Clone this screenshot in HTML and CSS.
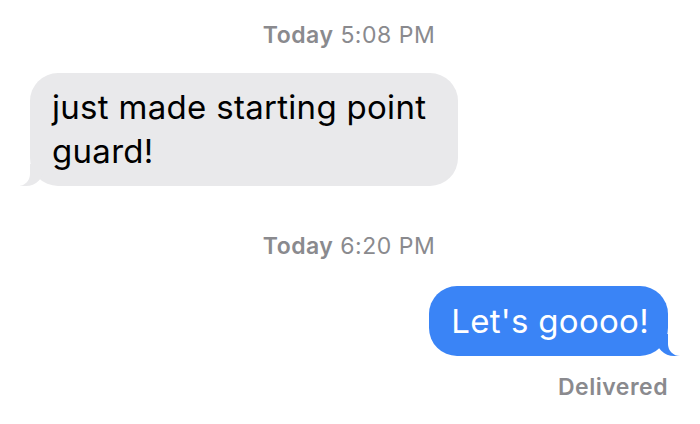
FILE: index.html
```html
<!DOCTYPE html>
<html lang="en">
<head>
    <meta charset="UTF-8">
    <meta name="viewport" content="width=device-width, initial-scale=1.0">
    <title>Messages</title>

    <link rel="stylesheet" href="styles.css">

</head>
<body>
  <div class="thread">
    <div class="stamp"><b>Today</b> 5:08 PM</div>

    <div class="row in">
      <div class="bubble gray">just made starting point guard!</div>
    </div>

    <div class="stamp second"><b>Today</b> 6:20 PM</div>

    <div class="row out">
      <div class="bubble blue">Let's goooo!</div>
    </div>

    <div class="status">Delivered</div>
  </div>
</body>
</html>
```

FILE: styles.css
```css
* {
  box-sizing: border-box;
}

body {
  margin: 0;
  padding: 0;
  background: #ffffff;
  font-family: Inter, 'Liberation Sans', sans-serif;
}

.thread {
  display: flex;
  flex-direction: column;
  padding: 22px 32px 0 30px;
}

.stamp {
  text-align: center;
  font-size: 23px;
  line-height: 26px;
  letter-spacing: 0.5px;
  color: #8a8a8e;
}

.stamp b {
  font-weight: 600;
}

.stamp.second {
  margin-top: 47px;
}

.row {
  display: flex;
  margin-top: 25px;
}

.row.out {
  justify-content: flex-end;
  margin-top: 27px;
}

.bubble {
  position: relative;
  font-size: 33px;
  line-height: 44px;
  letter-spacing: 0.3px;
  border-radius: 28px;
}

.bubble.gray {
  width: 428px;
  padding: 12px 20px 13px 22px;
  background: #e9e9eb;
  color: #000000;
}

.bubble.blue {
  padding: 13px 19px 13px 22px;
  background: #3a84f6;
  color: #ffffff;
}

/* tails */
.bubble::before,
.bubble::after {
  content: "";
  position: absolute;
  bottom: 0;
  height: 22px;
}

.bubble.gray::before {
  left: -10px;
  width: 24px;
  background: #e9e9eb;
  border-bottom-right-radius: 18px;
}

.bubble.gray::after {
  left: -20px;
  width: 20px;
  background: #ffffff;
  border-bottom-right-radius: 12px;
}

.bubble.blue::before {
  right: -12px;
  width: 24px;
  background: #3a84f6;
  border-bottom-left-radius: 18px;
}

.bubble.blue::after {
  right: -22px;
  width: 22px;
  background: #ffffff;
  border-bottom-left-radius: 12px;
}

.status {
  text-align: right;
  margin-top: 18px;
  font-size: 23px;
  line-height: 26px;
  letter-spacing: 0.5px;
  font-weight: 600;
  color: #8a8a8e;
}
```
